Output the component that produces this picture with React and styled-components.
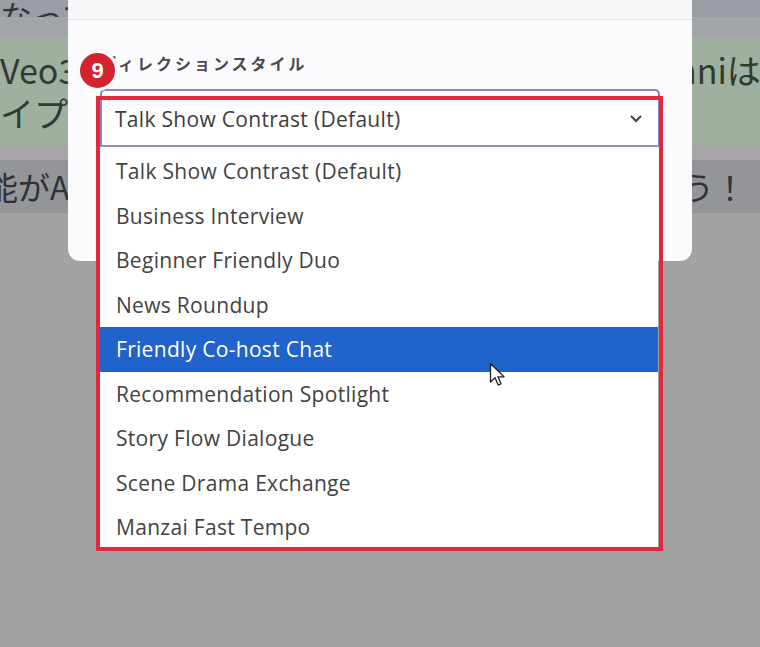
import React from 'react'
import styled, { createGlobalStyle } from 'styled-components'

const GlobalStyle = createGlobalStyle`
  html, body {
    margin: 0;
    padding: 0;
    background: #a3a3a3;
    overflow: hidden;
  }
  * { box-sizing: border-box; }
`

const Page = styled.div`
  position: relative;
  width: 760px;
  height: 647px;
  overflow: hidden;
  background: #a3a3a3;
  font-family: "Noto Sans CJK JP", "Noto Sans", sans-serif;
`

// dimmed article behind the dialog
const Backdrop = styled.div`
  display: flex;
  flex-direction: column;
`

const Band = styled.div`
  height: ${({ h }) => h}px;
  background: ${({ bg }) => bg};
  overflow: hidden;
  display: flex;
  flex-direction: column;
  justify-content: ${({ align }) => align || 'center'};
`

const Line = styled.div`
  display: grid;
  grid-template-columns: 640px 1fr;
  height: ${({ lh }) => lh || 43}px;
  line-height: ${({ lh }) => lh || 43}px;
  font-size: ${({ fs }) => fs || 34}px;
  color: ${({ color }) => color || '#2f3a31'};
  white-space: nowrap;
  overflow: hidden;

  span {
    overflow: hidden;
    text-indent: ${({ indent }) => indent || 0}px;
  }
`

const EndLine = styled(Line)`
  grid-template-columns: 1fr auto;
  padding-right: 14px;
`

const Dialog = styled.div`
  position: absolute;
  left: 68px;
  top: 0;
  width: 624px;
  background: #fbfbfd;
  border-radius: 0 0 12px 12px;
  padding-bottom: 114px;
`

const TopStrip = styled.div`
  height: 20px;
  background: #f7f7f9;
  border-bottom: 1px solid #e3e3e8;
`

const Field = styled.div`
  padding: 33px 32px 0 32px;
  display: flex;
  flex-direction: column;
`

const Label = styled.div`
  font-family: "Noto Sans CJK JP", sans-serif;
  font-size: 16px;
  line-height: 20px;
  font-weight: 700;
  letter-spacing: 3px;
  color: #4a4a50;
`

const SelectWrap = styled.div`
  position: relative;
  margin-top: 16px;
  width: 560px;
`

const SelectBox = styled.div`
  height: 58px;
  background: #fff;
  border: 2px solid #8285c9;
  border-bottom-color: #8f92b8;
  border-radius: 5px 5px 0 0;
  display: flex;
  align-items: center;
  justify-content: space-between;
  padding: 1px 16px 0 13px;
  font-family: "Open Sans", "Noto Sans", sans-serif;
  font-size: 21px;
  letter-spacing: 0.3px;
  color: #3d3d3d;
`

const Chevron = styled.svg`
  width: 12px;
  height: 8px;
`

const Options = styled.ul`
  position: absolute;
  top: 100%;
  left: 0;
  width: 558px;
  margin: 0;
  padding: 2px 0 0 0;
  list-style: none;
  background: #fff;
`

const Option = styled.li`
  height: 44.5px;
  display: flex;
  align-items: center;
  padding-left: 16px;
  font-family: "Open Sans", "Noto Sans", sans-serif;
  font-size: 21px;
  letter-spacing: 0.3px;
  color: ${({ active }) => (active ? '#ffffff' : '#424242')};
  background: ${({ active }) => (active ? '#1f63cb' : 'transparent')};
`

const Frame = styled.div`
  position: absolute;
  left: 96px;
  top: 96px;
  width: 567px;
  height: 455px;
  border: 4px solid #e2283a;
  pointer-events: none;
`

const Badge = styled.div`
  position: absolute;
  left: 77px;
  top: 50px;
  width: 41px;
  height: 41px;
  border-radius: 50%;
  background: #d5222f;
  border: 3px solid #ffffff;
  box-shadow: 0 0 1px rgba(0, 0, 0, 0.15);
  color: #fff;
  font-family: "Liberation Sans", Arial, sans-serif;
  font-weight: 700;
  font-size: 22px;
  display: flex;
  align-items: center;
  justify-content: center;
`

const Pointer = styled.svg`
  position: absolute;
  left: 489px;
  top: 362px;
  width: 18px;
  height: 26px;
`

const styles = [
  'Talk Show Contrast (Default)',
  'Business Interview',
  'Beginner Friendly Duo',
  'News Roundup',
  'Friendly Co-host Chat',
  'Recommendation Spotlight',
  'Story Flow Dialogue',
  'Scene Drama Exchange',
  'Manzai Fast Tempo',
]

const App = () => {
  const selected = 4

  return (
    <>
      <GlobalStyle />
      <Page>
        <Backdrop>
          <Band h={17} bg="#9b9fa5" align="flex-end">
            <Line fs={32} lh={30} color="#33373c"><span>なってください</span><span /></Line>
          </Band>
          <Band h={20} bg="#a2a5a9" />
          <Band h={108} bg="#9fb09f">
            <Line><span>Veo3の動画生成とGemi</span><span>Omniは</span></Line>
            <Line><span>イプのAIを組み合わせて</span><span /></Line>
          </Band>
          <Band h={15} bg="#a7a7aa" />
          <Band h={53} bg="#939599">
            <EndLine fs={32} indent={-14} color="#2f3236"><span>能がAIで自動化されます</span><span>しょう！</span></EndLine>
          </Band>
        </Backdrop>

        <Dialog>
          <TopStrip />
          <Field>
            <Label>ディレクションスタイル</Label>
            <SelectWrap>
              <SelectBox>
                <span>{styles[0]}</span>
                <Chevron viewBox="0 0 12 8">
                  <path d="M1.5 1.5 L6 6 L10.5 1.5" fill="none" stroke="#444" strokeWidth="2" strokeLinecap="round" />
                </Chevron>
              </SelectBox>
              <Options>
                {styles.map((s, i) => (
                  <Option key={i} active={i === selected}>{s}</Option>
                ))}
              </Options>
            </SelectWrap>
          </Field>
        </Dialog>

        <Frame />
        <Badge>9</Badge>
        <Pointer viewBox="0 0 18 26">
          <path d="M1.5 1.5 L1.5 20 L6 15.8 L9.2 23 L12 21.8 L8.9 14.8 L15 14.8 Z" fill="#fff" stroke="#222" strokeWidth="1.3" strokeLinejoin="round" />
        </Pointer>
      </Page>
    </>
  )
}

export default App
